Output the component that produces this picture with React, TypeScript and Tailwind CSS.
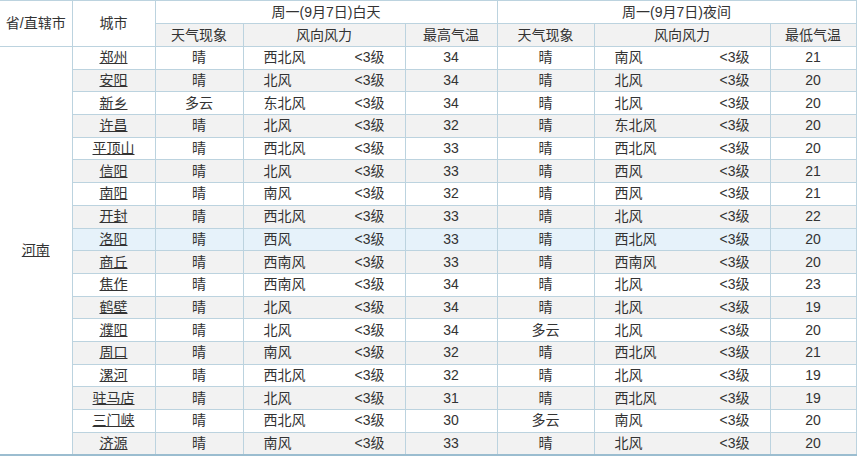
const rows = [
  ['郑州', '晴', '西北风', '34', '晴', '南风', '21'],
  ['安阳', '晴', '北风', '34', '晴', '北风', '20'],
  ['新乡', '多云', '东北风', '34', '晴', '北风', '20'],
  ['许昌', '晴', '北风', '32', '晴', '东北风', '20'],
  ['平顶山', '晴', '西北风', '33', '晴', '西北风', '20'],
  ['信阳', '晴', '北风', '33', '晴', '西风', '21'],
  ['南阳', '晴', '南风', '32', '晴', '西风', '21'],
  ['开封', '晴', '西北风', '33', '晴', '北风', '22'],
  ['洛阳', '晴', '西风', '33', '晴', '西北风', '20'],
  ['商丘', '晴', '西南风', '33', '晴', '西南风', '20'],
  ['焦作', '晴', '西南风', '34', '晴', '北风', '23'],
  ['鹤壁', '晴', '北风', '34', '晴', '北风', '19'],
  ['濮阳', '晴', '北风', '34', '多云', '北风', '20'],
  ['周口', '晴', '南风', '32', '晴', '西北风', '21'],
  ['漯河', '晴', '西北风', '32', '晴', '北风', '19'],
  ['驻马店', '晴', '北风', '31', '晴', '西北风', '19'],
  ['三门峡', '晴', '西北风', '30', '多云', '南风', '20'],
  ['济源', '晴', '南风', '33', '晴', '北风', '20'],
]

const cell = 'border border-[#bcd3df] text-center font-normal p-0'

const App = () => {
  return (
    <div className="w-[858px] h-[457px] bg-white text-[#333] text-[14px] overflow-hidden" style={{ fontFamily: '"Liberation Sans", "Noto Sans CJK SC", sans-serif' }}>
      <table className="table-fixed border-collapse w-[856px] border-t border-t-[#a9c7d8] border-b-2 border-b-[#9bbdd0]">
        <colgroup>
          <col className="w-[72px]" />
          <col className="w-[83px]" />
          <col className="w-[88px]" />
          <col className="w-[162px]" />
          <col className="w-[92px]" />
          <col className="w-[97px]" />
          <col className="w-[176px]" />
          <col className="w-[86px]" />
        </colgroup>
        <thead>
          <tr className="h-[23px] bg-white">
            <th rowSpan={2} className={`${cell} border-l-0`}>省/直辖市</th>
            <th rowSpan={2} className={cell}>城市</th>
            <th colSpan={3} className={cell}>周一(9月7日)白天</th>
            <th colSpan={3} className={cell}>周一(9月7日)夜间</th>
          </tr>
          <tr className="h-[23px] bg-[#f2f2f2]">
            <th className={cell}>天气现象</th>
            <th className={cell}>风向风力</th>
            <th className={cell}>最高气温</th>
            <th className={cell}>天气现象</th>
            <th className={cell}>风向风力</th>
            <th className={cell}>最低气温</th>
          </tr>
        </thead>
        <tbody>
          {rows.map((r, i) => {
            const bg = i === 8 ? 'bg-[#e6f2fa]' : i % 2 === 1 ? 'bg-[#f2f2f2]' : 'bg-white'
            return (
              <tr key={r[0]} className={`h-[22.7px] ${bg}`}>
                {i === 0 && (
                  <td rowSpan={18} className={`${cell} border-l-0 bg-white`}>
                    <a href="#" className="underline">河南</a>
                  </td>
                )}
                <td className={cell}>
                  <a href="#" className="underline">{r[0]}</a>
                </td>
                <td className={cell}>{r[1]}</td>
                <td className={cell}>
                  <div className="flex justify-between px-5">
                    <span>{r[2]}</span>
                    <span>&lt;3级</span>
                  </div>
                </td>
                <td className={cell}>{r[3]}</td>
                <td className={cell}>{r[4]}</td>
                <td className={cell}>
                  <div className="flex justify-between px-5">
                    <span>{r[5]}</span>
                    <span>&lt;3级</span>
                  </div>
                </td>
                <td className={cell}>{r[6]}</td>
              </tr>
            )
          })}
        </tbody>
      </table>
    </div>
  )
}

export default App
